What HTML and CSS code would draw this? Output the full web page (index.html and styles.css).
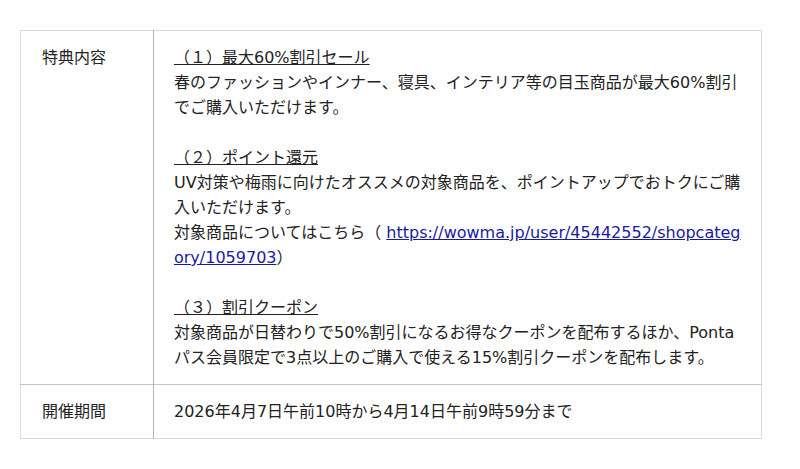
FILE: index.html
```html
<!DOCTYPE html>
<html lang="ja">
<head>
<meta charset="utf-8">
<link rel="stylesheet" href="styles.css">
</head>
<body>
<table class="info">
  <tr>
    <th class="label">特典内容</th>
    <td class="body">
      <p><span class="head">（１）最大60%割引セール</span><br>春のファッションやインナー、寝具、インテリア等の目玉商品が最大60%割引でご購入いただけます。</p>
      <p class="gap"><span class="head">（２）ポイント還元</span><br>UV対策や梅雨に向けたオススメの対象商品を、ポイントアップでおトクにご購入いただけます。<br>対象商品についてはこちら（ <a href="#">https://wowma.jp/user/45442552/shopcategory/1059703</a>）</p>
      <p class="gap"><span class="head">（３）割引クーポン</span><br>対象商品が日替わりで50%割引になるお得なクーポンを配布するほか、Pontaパス会員限定で3点以上のご購入で使える15%割引クーポンを配布します。</p>
    </td>
  </tr>
  <tr>
    <th class="label">開催期間</th>
    <td class="body">2026年4月7日午前10時から4月14日午前9時59分まで</td>
  </tr>
</table>
</body>
</html>
```

FILE: styles.css
```css
html, body {
  margin: 0;
  padding: 0;
  background: #fff;
}
body {
  padding: 30px 38px 0 20px;
  font-family: "DejaVu Sans", "Noto Sans CJK JP", sans-serif;
  font-size: 16px;
  line-height: 25px;
  color: #222;
}
.info {
  width: 742px;
  border-collapse: collapse;
  border: 1px solid #ddd;
}
.info tr + tr .label,
.info tr + tr .body {
  border-top: 1px solid #c4c4c4;
}
.label {
  width: 91px;
  text-align: left;
  font-weight: normal;
  vertical-align: top;
  padding: 14px 20px 14px 21px;
  border-right: 1px solid #b4b4b4;
}
.body {
  vertical-align: top;
  padding: 14px 20px 14px 20px;
  word-break: break-all;
}
.body p {
  margin: 0;
}
.body p.gap {
  margin-top: 25px;
}
.head {
  text-decoration: underline;
}
a {
  color: #1a1aa0;
  text-decoration: underline;
}
```
